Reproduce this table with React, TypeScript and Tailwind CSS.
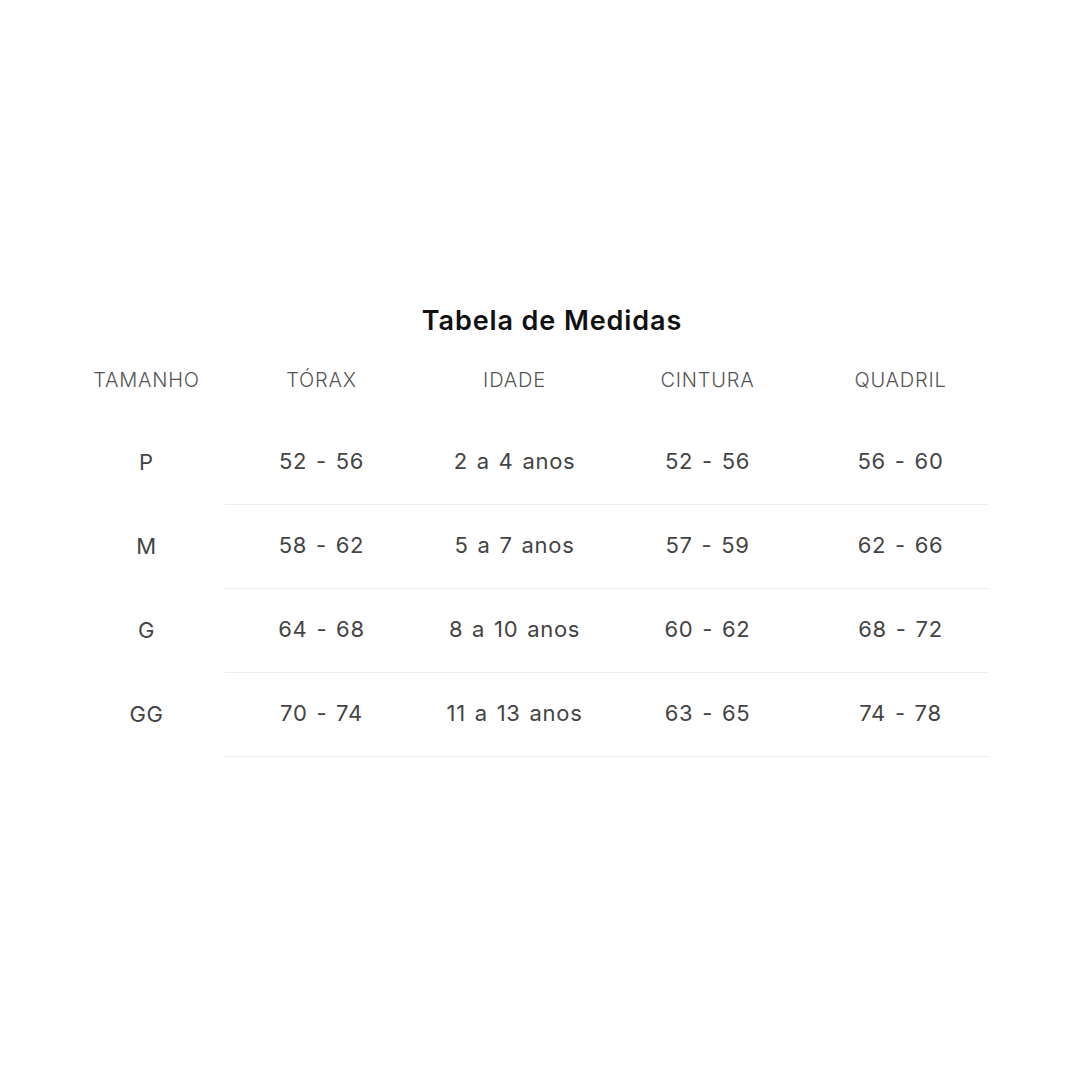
const headers = ["TAMANHO", "TÓRAX", "IDADE", "CINTURA", "QUADRIL"];

const rows = [
  ["P", "52 - 56", "2 a 4 anos", "52 - 56", "56 - 60"],
  ["M", "58 - 62", "5 a 7 anos", "57 - 59", "62 - 66"],
  ["G", "64 - 68", "8 a 10 anos", "60 - 62", "68 - 72"],
  ["GG", "70 - 74", "11 a 13 anos", "63 - 65", "74 - 78"],
];

const cols = "grid grid-cols-[157px_193px_193px_193px_184px]";

export default function App() {
  return (
    <div className="w-[1080px] h-[1080px] bg-white flex flex-col items-center pt-[302px]" style={{ fontFamily: "Inter, 'Noto Sans', sans-serif" }}>
      <h1 className="text-[27px] leading-[38px] font-semibold text-[#111] tracking-[0.9px] ml-[24px]">Tabela de Medidas</h1>

      <div className="w-[920px] self-start ml-[68px] mt-[20px]">
        <div className={cols + " h-[40px] items-center"}>
          {headers.map((h, j) => (
            <div key={h} className={"text-center text-[20px] font-light text-[#555] tracking-[0.8px] " + (j === 4 ? "pl-[9px]" : "")}>{h}</div>
          ))}
        </div>

        <div className="mt-[21px]">
          {rows.map((r, i) => (
            <div key={i} className={cols + " h-[84px]"}>
              {r.map((c, j) => (
                <div
                  key={j}
                  className={
                    "flex items-center justify-center text-[22px] text-[#444] tracking-[0.7px] [word-spacing:2px] pb-[2px] " +
                    (j === 0 ? "" : "border-b border-[#eeeeee] ") +
                    (j === 4 ? "pl-[9px]" : "")
                  }
                >
                  {c}
                </div>
              ))}
            </div>
          ))}
        </div>
      </div>
    </div>
  );
}
